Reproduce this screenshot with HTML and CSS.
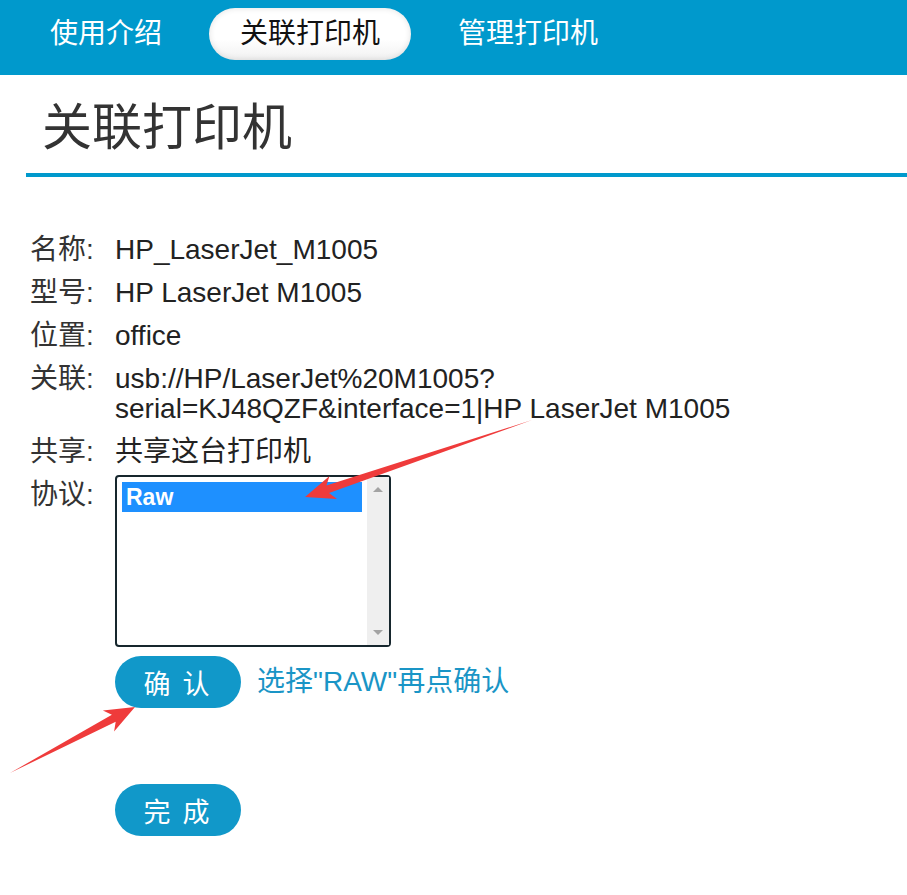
FILE: index.html
```html
<!DOCTYPE html>
<html lang="zh-CN">
<head>
  <meta charset="UTF-8" />
  <meta name="viewport" content="width=device-width, initial-scale=1.0"/>
  <title>关联打印机</title>
  <link rel="stylesheet" href="styles.css">
</head>
<body>
  <div class="nav">
    <a class="tab" href="#">使用介绍</a>
    <a class="tab active" href="#">关联打印机</a>
    <a class="tab" href="#">管理打印机</a>
  </div>

  <div class="page">
    <h1 class="title">关联打印机</h1>

    <div class="info">
      <div class="row"><span class="label">名称:</span><span class="value">HP_LaserJet_M1005</span></div>
      <div class="row"><span class="label">型号:</span><span class="value">HP LaserJet M1005</span></div>
      <div class="row"><span class="label">位置:</span><span class="value">office</span></div>
      <div class="row"><span class="label">关联:</span><span class="value">usb://HP/LaserJet%20M1005?<br>serial=KJ48QZF&amp;interface=1|HP LaserJet M1005</span></div>
      <div class="row"><span class="label">共享:</span><span class="value">共享这台打印机</span></div>
      <div class="row">
        <span class="label">协议:</span>
        <div class="value">
          <div class="listbox">
            <div class="options">
              <div class="option selected">Raw</div>
            </div>
            <div class="scrollbar">
              <span class="arrow up"></span>
              <span class="arrow down"></span>
            </div>
          </div>
          <div class="actions">
            <button type="button" class="btn">确 认</button>
            <span class="hint">选择"RAW"再点确认</span>
          </div>
          <button type="button" class="btn done">完 成</button>
        </div>
      </div>
    </div>
  </div>

  <!-- red annotation arrows drawn over the page -->
  <svg class="marks" width="907" height="895" viewBox="0 0 907 895">
    <polygon points="532,420 329,493 337,499 305,497 329.5,476 326.4,485.5" />
    <polygon points="10,773 115.7,721.7 114.1,731.6 135,707 102.9,710.4 111.9,714.7" />
  </svg>
</body>
</html>
```

FILE: styles.css
```css
body {
  font-family: 'Liberation Sans', 'Noto Sans CJK SC', sans-serif;
  margin: 0;
  padding: 0;
  background: white;
  color: #222;
  position: relative;
  min-height: 895px;
}
.nav {
  background: #0099cc;
  height: 75px;
  box-sizing: border-box;
  padding: 8px 0 0 19px;
  display: flex;
  gap: 16px;
  align-items: flex-start;
}
.tab {
  display: block;
  height: 52px;
  line-height: 52px;
  padding: 0 31px;
  font-size: 28px;
  color: white;
  text-decoration: none;
  border-radius: 26px;
}
.tab.active {
  background: linear-gradient(to bottom, #ffffff 60%, #f1f1f1);
  color: #111;
  box-shadow: inset 0 0 6px rgba(0, 0, 0, 0.12);
}
.page {
  padding-left: 26px;
}
.title {
  margin: 0;
  padding: 23px 0 15px 16px;
  font-size: 50px;
  font-weight: 400;
  line-height: 60px;
  color: #333;
  border-bottom: 4px solid #0099cc;
}
.info {
  padding: 58px 0 0 4px;
}
.row {
  display: flex;
  align-items: flex-start;
  margin-bottom: 13px;
  font-size: 28px;
  line-height: 30px;
}
.label {
  width: 85px;
  flex: none;
  color: #333;
}
.value {
  color: #222;
}
.listbox {
  width: 276px;
  height: 172px;
  box-sizing: border-box;
  margin-top: -5px;
  border: 2px solid #16262d;
  border-radius: 4px;
  display: flex;
  background: white;
}
.options {
  flex: 1;
  padding: 5px;
}
.option {
  height: 30px;
  line-height: 30px;
  padding-left: 4px;
  font-size: 23px;
  font-weight: bold;
}
.option.selected {
  background: #1e90ff;
  color: white;
}
.scrollbar {
  width: 22px;
  background: #efefef;
  display: flex;
  flex-direction: column;
  justify-content: space-between;
  align-items: center;
  padding: 10px 0;
}
.arrow {
  width: 0;
  height: 0;
  border-left: 5px solid transparent;
  border-right: 5px solid transparent;
}
.arrow.up {
  border-bottom: 5px solid #a3a3a3;
}
.arrow.down {
  border-top: 5px solid #a3a3a3;
}
.actions {
  display: flex;
  align-items: center;
  gap: 16px;
  margin-top: 9px;
}
.btn {
  width: 126px;
  height: 52px;
  border: none;
  border-radius: 26px;
  background: #1198c9;
  color: white;
  font-family: 'Noto Sans CJK SC', sans-serif;
  font-size: 27px;
  letter-spacing: 3px;
  padding: 0;
  cursor: pointer;
}
.btn.done {
  display: block;
  margin-top: 76px;
}
.hint {
  color: #1a95c6;
  font-size: 28px;
}
.marks {
  position: absolute;
  left: 0;
  top: 0;
  pointer-events: none;
}
.marks polygon {
  fill: #ef3b3b;
}
```
